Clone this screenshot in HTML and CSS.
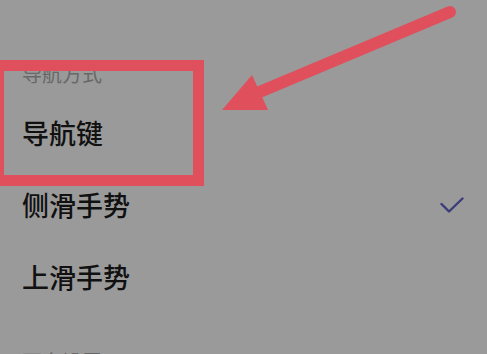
FILE: index.html
```html
<!DOCTYPE html>
<html lang="zh-CN">
<head>
<meta charset="utf-8">
<title>导航方式</title>
<link rel="stylesheet" href="styles.css">
</head>
<body>
<div class="screen">
  <div class="list">
    <div class="row">手势导航设置</div>
    <div class="label first">导航方式</div>
    <div class="row">导航键</div>
    <div class="row">
      <span>侧滑手势</span>
      <svg class="check" width="24" height="16" viewBox="0 0 24 16"><polyline points="1.5,7 9,14.5 22.5,1.5" fill="none" stroke="#3c3c7a" stroke-width="2.4" stroke-linecap="round" stroke-linejoin="round"/></svg>
    </div>
    <div class="row">上滑手势</div>
    <div class="label">更多设置</div>
  </div>
  <div class="highlight"></div>
  <svg class="arrow" width="487" height="354" viewBox="0 0 487 354">
    <line x1="450" y1="12" x2="250" y2="96" stroke="#df4f5c" stroke-width="12" stroke-linecap="round"/>
    <polygon points="222,110 252,75 268,110" fill="#df4f5c"/>
  </svg>
</div>
</body>
</html>
```

FILE: styles.css
```css
html, body {
  margin: 0;
  padding: 0;
  background: #9a9a9a;
}

.screen {
  position: relative;
  width: 487px;
  height: 354px;
  overflow: hidden;
  font-family: "Noto Sans CJK SC", "Noto Sans", sans-serif;
}

.list {
  margin-top: -50px;
  display: flex;
  flex-direction: column;
}

.row {
  height: 72px;
  display: flex;
  align-items: center;
  justify-content: space-between;
  padding: 0 23px 0 22px;
  font-size: 27px;
  font-weight: 500;
  line-height: 72px;
  color: #111111;
}

.label {
  margin-top: 35px;
  margin-bottom: 9px;
  height: 28px;
  line-height: 28px;
  padding-left: 22px;
  font-size: 20px;
  color: #686868;
}

.label.first {
  margin-top: 38px;
}

.check {
  display: block;
}

.highlight {
  position: absolute;
  left: -7px;
  top: 60px;
  width: 189px;
  height: 104px;
  border: 11px solid #df4f5c;
}

.arrow {
  position: absolute;
  left: 0;
  top: 0;
}
```
